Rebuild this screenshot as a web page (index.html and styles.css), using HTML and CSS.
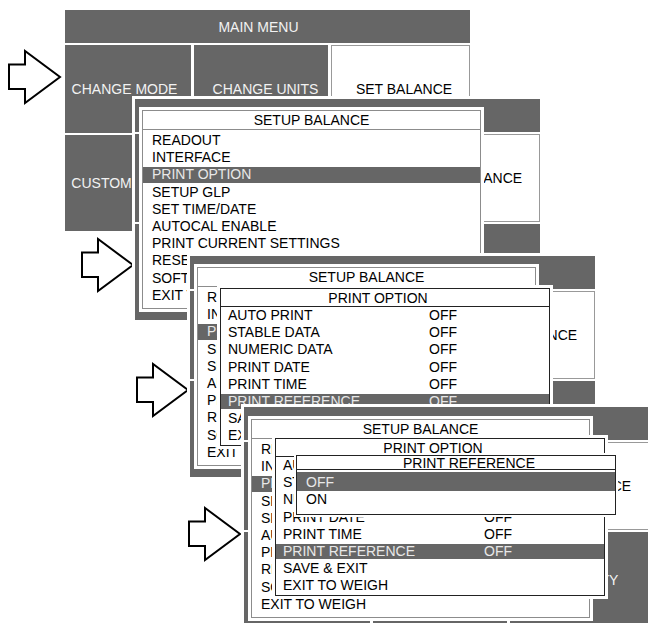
FILE: index.html
```html
<!DOCTYPE html>
<html>
<head>
<meta charset="utf-8">
<link rel="stylesheet" href="styles.css">
</head>
<body>
<div class="canvas">

  <svg class="arrow a1" viewBox="0 0 54 55" width="54" height="55"><polygon points="1,14.5 17,14.5 17,1 52,27 17,53 17,39 1,39"/></svg>

  <div class="stage s1">
    <div class="mm-title">MAIN MENU</div>
    <div class="cell c1">CHANGE MODE</div>
    <div class="cell c2">CHANGE UNITS</div>
    <div class="cell c3 sel">SET BALANCE</div>
    <div class="cell c1">CUSTOM UNITS</div>
    <div class="cell c2">CUSTOM MODES</div>
    <div class="cell c3">SECURITY</div>
  </div>

  <svg class="arrow a2" viewBox="0 0 54 55" width="54" height="55"><polygon points="1,14.5 17,14.5 17,1 52,27 17,53 17,39 1,39"/></svg>

  <div class="stage s2">
    <div class="mm-title">MAIN MENU</div>
    <div class="cell c1">CHANGE MODE</div>
    <div class="cell c2">CHANGE UNITS</div>
    <div class="cell c3 sel">SET BALANCE</div>
    <div class="cell c1">CUSTOM UNITS</div>
    <div class="cell c2">CUSTOM MODES</div>
    <div class="cell c3">SECURITY</div>

    <div class="win win-setup">
      <div class="frame">
        <div class="win-title">SETUP BALANCE</div>
        <ul class="items">
          <li>READOUT</li>
          <li>INTERFACE</li>
          <li class="hi">PRINT OPTION</li>
          <li>SETUP GLP</li>
          <li>SET TIME/DATE</li>
          <li>AUTOCAL ENABLE</li>
          <li>PRINT CURRENT SETTINGS</li>
          <li>RESET FACTORY</li>
          <li>SOFTWARE REVISION</li>
          <li>EXIT TO WEIGH</li>
        </ul>
      </div>
    </div>
  </div>

  <svg class="arrow a3" viewBox="0 0 54 55" width="54" height="55"><polygon points="1,14.5 17,14.5 17,1 52,27 17,53 17,39 1,39"/></svg>

  <div class="stage s3">
    <div class="mm-title">MAIN MENU</div>
    <div class="cell c1">CHANGE MODE</div>
    <div class="cell c2">CHANGE UNITS</div>
    <div class="cell c3 sel">SET BALANCE</div>
    <div class="cell c1">CUSTOM UNITS</div>
    <div class="cell c2">CUSTOM MODES</div>
    <div class="cell c3">SECURITY</div>

    <div class="win win-setup">
      <div class="frame">
        <div class="win-title">SETUP BALANCE</div>
        <ul class="items">
          <li>READOUT</li>
          <li>INTERFACE</li>
          <li class="hi">PRINT OPTION</li>
          <li>SETUP GLP</li>
          <li>SET TIME/DATE</li>
          <li>AUTOCAL ENABLE</li>
          <li>PRINT CURRENT SETTINGS</li>
          <li>RESET FACTORY</li>
          <li>SOFTWARE REVISION</li>
          <li>EXIT TO WEIGH</li>
        </ul>
      </div>
    </div>

    <div class="win win-po">
      <div class="frame">
        <div class="win-title">PRINT OPTION</div>
        <ul class="items">
          <li><span>AUTO PRINT</span><span>OFF</span></li>
          <li><span>STABLE DATA</span><span>OFF</span></li>
          <li><span>NUMERIC DATA</span><span>OFF</span></li>
          <li><span>PRINT DATE</span><span>OFF</span></li>
          <li><span>PRINT TIME</span><span>OFF</span></li>
          <li class="hi"><span>PRINT REFERENCE</span><span>OFF</span></li>
          <li><span>SAVE &amp; EXIT</span><span></span></li>
          <li><span>EXIT TO WEIGH</span><span></span></li>
        </ul>
      </div>
    </div>
  </div>

  <svg class="arrow a4" viewBox="0 0 54 55" width="54" height="55"><polygon points="1,14.5 17,14.5 17,1 52,27 17,53 17,39 1,39"/></svg>

  <div class="stage s4">
    <div class="mm-title">MAIN MENU</div>
    <div class="cell c1">CHANGE MODE</div>
    <div class="cell c2">CHANGE UNITS</div>
    <div class="cell c3 sel">SET BALANCE</div>
    <div class="cell c1">CUSTOM UNITS</div>
    <div class="cell c2">CUSTOM MODES</div>
    <div class="cell c3">SECURITY</div>

    <div class="win win-setup">
      <div class="frame">
        <div class="win-title">SETUP BALANCE</div>
        <ul class="items">
          <li>READOUT</li>
          <li>INTERFACE</li>
          <li class="hi">PRINT OPTION</li>
          <li>SETUP GLP</li>
          <li>SET TIME/DATE</li>
          <li>AUTOCAL ENABLE</li>
          <li>PRINT CURRENT SETTINGS</li>
          <li>RESET FACTORY</li>
          <li>SOFTWARE REVISION</li>
          <li>EXIT TO WEIGH</li>
        </ul>
      </div>
    </div>

    <div class="win win-po">
      <div class="frame">
        <div class="win-title">PRINT OPTION</div>
        <ul class="items">
          <li><span>AUTO PRINT</span><span>OFF</span></li>
          <li><span>STABLE DATA</span><span>OFF</span></li>
          <li><span>NUMERIC DATA</span><span>OFF</span></li>
          <li><span>PRINT DATE</span><span>OFF</span></li>
          <li><span>PRINT TIME</span><span>OFF</span></li>
          <li class="hi"><span>PRINT REFERENCE</span><span>OFF</span></li>
          <li><span>SAVE &amp; EXIT</span><span></span></li>
          <li><span>EXIT TO WEIGH</span><span></span></li>
        </ul>
      </div>
    </div>

    <div class="win win-pr">
      <div class="frame">
        <div class="win-title">PRINT REFERENCE</div>
        <ul class="items">
          <li class="hi">OFF</li>
          <li>ON</li>
        </ul>
      </div>
    </div>
  </div>

</div>
</body>
</html>
```

FILE: styles.css
```css
* {
  box-sizing: border-box;
  margin: 0;
  padding: 0;
}

body {
  margin: 0;
  background: #fff;
  font-family: "Liberation Sans", Arial, sans-serif;
  font-size: 14px;
  color: #000;
}

.canvas {
  position: relative;
  width: 648px;
  height: 623px;
  overflow: hidden;
}

/* arrows */
.arrow {
  position: absolute;
  overflow: visible;
}
.arrow polygon {
  fill: #fff;
  stroke: #000;
  stroke-width: 2;
  stroke-linejoin: miter;
}
.a1 { left: 8px; top: 50px; }
.a2 { left: 81px; top: 238px; }
.a3 { left: 136px; top: 363px; }
.a4 { left: 188px; top: 507px; }

/* main menu screen */
.stage {
  position: absolute;
  width: 405px;
  display: grid;
  grid-template-columns: 126px 134px 139px;
  grid-template-rows: 33px 88px 96px;
  gap: 2px 3px;
  background: #fff;
  box-shadow: 0 0 0 3px #fff;
}
.s1 { left: 65px; top: 10px; }
.s2 { left: 135px; top: 99px; }
.s3 { left: 190px; top: 256px; }
.s4 { left: 244px; top: 407px; }

.mm-title {
  grid-column: 1 / -1;
  background: #666;
  color: #f2f2f2;
  display: flex;
  align-items: center;
  justify-content: center;
  padding-right: 18px;
}

.cell {
  background: #666;
  color: #f2f2f2;
  display: flex;
  align-items: center;
  justify-content: center;
  white-space: nowrap;
  overflow: hidden;
}
.cell.c1 { padding-right: 7px; }
.cell.c2 { padding-left: 9px; }
.cell.c3 { padding-left: 7px; }
.cell.sel {
  background: #fff;
  color: #000;
  border: 1px solid #999;
}

/* windows */
.win {
  position: absolute;
  background: #fff;
  border: 3px solid #fff;
}
.frame {
  border: 1px solid #8c8c8c;
  background: #fff;
}
.win-title {
  height: 19px;
  line-height: 19px;
  text-align: center;
  white-space: nowrap;
  border-bottom: 1px solid #8c8c8c;
}
.items {
  list-style: none;
  padding: 2px 0 4px;
}
.items li {
  height: 17.2px;
  line-height: 17.2px;
  padding-left: 9px;
  white-space: nowrap;
  overflow: hidden;
}
.items li.hi {
  background: #666;
  color: #e8e8e8;
  box-shadow: inset 0 1px #fff, inset 0 -1px #fff;
}

.win-setup {
  left: 4px;
  top: 8px;
  width: 345px;
}
.s4 .win-setup { top: 9px; }

/* print option */
.win-po {
  left: 27px;
  top: 29px;
  width: 336px;
}
.s4 .win-po {
  left: 28px;
  top: 28px;
  width: 336px;
}
.win-po .frame { border-color: #222; }
.win-po .win-title {
  height: 18px;
  line-height: 18px;
  border-bottom-color: #222;
  padding-right: 14px;
}
.win-po .items { padding: 0; }
.win-po .items li {
  display: grid;
  grid-template-columns: 201px auto;
  padding-left: 7px;
}

/* print reference */
.win-pr {
  left: 50px;
  top: 46px;
  width: 324px;
  border-width: 2px;
}
.win-pr .frame { border-color: #222; }
.win-pr .win-title {
  height: 14px;
  line-height: 14px;
  border-bottom-color: #222;
  padding-left: 26px;
}
.win-pr .items { padding: 2px 0 6px; }
.win-pr .items li {
  height: 17px;
  line-height: 17px;
}
.win-pr .items li.hi {
  height: 19px;
  padding-top: 2px;
  box-shadow: none;
}
```
